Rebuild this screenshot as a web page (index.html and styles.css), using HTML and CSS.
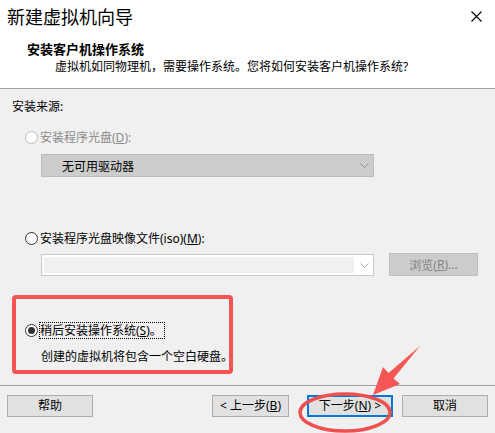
FILE: index.html
```html
<!DOCTYPE html>
<html lang="zh-CN">
<head>
<meta charset="utf-8">
<title>新建虚拟机向导</title>
<link rel="stylesheet" href="styles.css">
</head>
<body>
<div class="page">
  <div class="header">
    <div class="titlebar">
      <div class="title">新建虚拟机向导</div>
      <svg class="close" width="11" height="11" viewBox="0 0 11 11"><path d="M0.5 0.5 L10.5 10.5 M10.5 0.5 L0.5 10.5" stroke="#000" stroke-width="1.1" fill="none"/></svg>
    </div>
    <div class="heading">安装客户机操作系统</div>
    <div class="sub">虚拟机如同物理机，需要操作系统。您将如何安装客户机操作系统?</div>
  </div>

  <div class="content">
    <div class="label">安装来源:</div>

    <div class="option opt1 disabled">
      <span class="radio"></span>
      <span class="otext">安装程序光盘(<u>D</u>):</span>
    </div>
    <div class="select">
      <span class="select-text">无可用驱动器</span>
      <svg class="chev" width="9" height="5" viewBox="0 0 9 5"><polyline points="0.5,0.5 4.5,4.5 8.5,0.5" stroke="#8f8f8f" fill="none"/></svg>
    </div>

    <div class="option opt2">
      <span class="radio"></span>
      <span class="otext">安装程序光盘映像文件(iso)(<u>M</u>):</span>
    </div>
    <div class="iso-row">
      <div class="combo">
        <div class="edit"></div>
        <svg class="chev" width="9" height="5" viewBox="0 0 9 5"><polyline points="0.5,0.5 4.5,4.5 8.5,0.5" stroke="#aaaaaa" fill="none"/></svg>
      </div>
      <div class="browse">浏览(<u>R</u>)...</div>
    </div>

    <div class="option opt3">
      <span class="radio checked"></span>
      <span class="otext focus">稍后安装操作系统(<u>S</u>)。</span>
    </div>
    <div class="desc">创建的虚拟机将包含一个空白硬盘。</div>
  </div>

  <div class="footer">
    <div class="btn help">帮助</div>
    <div class="btn back">&lt; 上一步(<u>B</u>)</div>
    <div class="btn next">下一步(<u>N</u>) &gt;</div>
    <div class="btn cancel">取消</div>
  </div>

  <svg class="annot" width="495" height="433" viewBox="0 0 495 433">
    <rect x="14" y="297" width="217" height="75" rx="2" fill="none" stroke="#f55454" stroke-width="4"/>
    <polygon points="373,395 383,367 388.5,373 420,346 393.5,378.5 400,384" fill="#f75656"/>
    <ellipse cx="345" cy="412.5" rx="45" ry="18.5" fill="none" stroke="#ee5050" stroke-width="3.5"/>
  </svg>
</div>
</body>
</html>
```
FILE: styles.css
```css
html, body {
  margin: 0;
  padding: 0;
}
body {
  width: 495px;
  height: 433px;
  overflow: hidden;
  background: #f0f0f0;
  font-family: "Noto Sans", "Noto Sans CJK SC", sans-serif;
  font-size: 12px;
  color: #000;
}
.page {
  position: relative;
  width: 495px;
  height: 433px;
  display: flex;
  flex-direction: column;
}
u {
  text-decoration: underline;
  text-underline-offset: 1px;
}

/* header */
.header {
  background: #fff;
  height: 88px;
  border-bottom: 1px solid #a0a0a0;
  flex: none;
}
.titlebar {
  display: flex;
  justify-content: space-between;
  align-items: flex-start;
  padding: 5px 13px 0 7px;
  height: 24px;
}
.title {
  font-size: 18px;
  line-height: 24px;
}
.close {
  margin-top: 6px;
}
.heading {
  font-size: 13px;
  font-weight: bold;
  line-height: 16px;
  margin-top: 12px;
  padding-left: 27px;
}
.sub {
  line-height: 16px;
  margin-top: 2px;
  padding-left: 55px;
}

/* content */
.content {
  padding-left: 12px;
  display: flex;
  flex-direction: column;
  align-items: flex-start;
}
.label {
  line-height: 16px;
  margin-top: 10px;
}
.option {
  display: flex;
  align-items: center;
  height: 16px;
  padding-left: 13px;
}
.option.disabled {
  color: #8a8a8a;
}
.radio {
  width: 13px;
  height: 13px;
  box-sizing: border-box;
  border: 1px solid #333;
  border-radius: 50%;
  background: #fff;
  display: flex;
  align-items: center;
  justify-content: center;
  flex: none;
}
.disabled .radio {
  border-color: #bcbcbc;
}
.radio.checked::after {
  content: "";
  width: 7px;
  height: 7px;
  border-radius: 50%;
  background: #333;
}
.otext {
  margin-left: 2px;
  line-height: 15px;
}
.focus {
  outline: 1px dotted #000;
  outline-offset: 0;
  padding-right: 2px;
}
.opt1 { margin-top: 14px; }
.opt2 { margin-top: 53px; }
.opt3 { margin-top: 46px; }

.select {
  margin: 9px 0 0 29px;
  width: 333px;
  height: 23px;
  box-sizing: border-box;
  background: #cccccc;
  border: 1px solid #bcbcbc;
  display: flex;
  align-items: center;
  justify-content: space-between;
  padding: 0 4px 0 20px;
}
.iso-row {
  margin: 7px 0 0 29px;
  display: flex;
  align-items: flex-start;
}
.combo {
  margin-top: 1px;
  width: 333px;
  height: 22px;
  box-sizing: border-box;
  border: 1px solid #c9c9c9;
  background: #fff;
  padding: 2px 4px 2px 2px;
  display: flex;
  align-items: center;
}
.combo .edit {
  width: 310px;
  height: 16px;
  background: #f0f0f0;
  margin-right: 6px;
}
.browse {
  margin-left: 15px;
  width: 89px;
  height: 23px;
  box-sizing: border-box;
  background: #cccccc;
  border: 1px solid #bfbfbf;
  color: #838383;
  display: flex;
  align-items: center;
  justify-content: center;
}
.desc {
  margin: 11px 0 0 29px;
  line-height: 16px;
}

/* footer */
.footer {
  margin-top: auto;
  height: 38px;
  border-top: 1px solid #a0a0a0;
  display: flex;
  align-items: flex-start;
  padding: 9px 7px 0 7px;
  box-sizing: content-box;
}
.btn {
  height: 22px;
  box-sizing: border-box;
  background: #e1e1e1;
  border: 1px solid #adadad;
  display: flex;
  align-items: center;
  justify-content: center;
  line-height: 16px;
}
.help { width: 86px; }
.back { width: 77px; margin-left: auto; }
.next { width: 86px; margin-left: 18px; border: 2px solid #0078d7; }
.cancel { width: 86px; margin-left: 9px; }

.annot {
  position: absolute;
  left: 0;
  top: 0;
  pointer-events: none;
}
```
